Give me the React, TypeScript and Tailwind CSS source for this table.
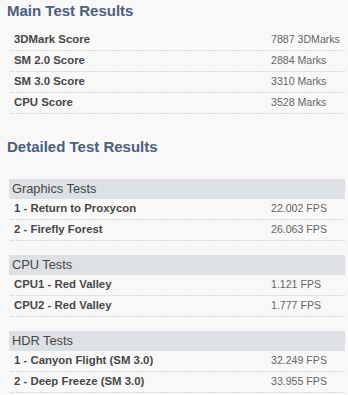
const mainResults = [
  { label: '3DMark Score', value: '7887 3DMarks' },
  { label: 'SM 2.0 Score', value: '2884 Marks' },
  { label: 'SM 3.0 Score', value: '3310 Marks' },
  { label: 'CPU Score', value: '3528 Marks' },
];

const detailedResults = [
  {
    title: 'Graphics Tests',
    rows: [
      { label: '1 - Return to Proxycon', value: '22.002 FPS' },
      { label: '2 - Firefly Forest', value: '26.063 FPS' },
    ],
  },
  {
    title: 'CPU Tests',
    rows: [
      { label: 'CPU1 - Red Valley', value: '1.121 FPS' },
      { label: 'CPU2 - Red Valley', value: '1.777 FPS' },
    ],
  },
  {
    title: 'HDR Tests',
    rows: [
      { label: '1 - Canyon Flight (SM 3.0)', value: '32.249 FPS' },
      { label: '2 - Deep Freeze (SM 3.0)', value: '33.955 FPS' },
    ],
  },
];

const ResultRow = ({ label, value }: { label: string; value: string }) => (
  <div className="grid grid-cols-[262px_1fr] items-center h-[21px] pb-px bg-[linear-gradient(to_right,#b4b4b4_1px,transparent_1px)] bg-size-[3px_1px] bg-repeat-x bg-bottom">
    <span className="pl-[5px] text-[11.4px] font-bold text-[#474747]">{label}</span>
    <span className="text-[10.6px] text-[#666]">{value}</span>
  </div>
);

export default function App() {
  return (
    <div className="w-[348px] h-[395px] overflow-hidden bg-[#f8f8f8] font-['Liberation_Sans',Arial,sans-serif]">
      <h2 className="pl-[7px] mt-[2px] text-[15px] leading-[18px] font-bold text-[#4e5f7c]">
        Main Test Results
      </h2>
      <div className="ml-[9px] mr-[3px] mt-[10px]">
        {mainResults.map((r) => (
          <ResultRow key={r.label} {...r} />
        ))}
      </div>

      <h2 className="pl-[7px] mt-[24px] text-[15px] leading-[18px] font-bold text-[#4e5f7c]">
        Detailed Test Results
      </h2>
      <div className="ml-[9px] mr-[3px] mt-[23px] flex flex-col gap-[14px]">
        {detailedResults.map((section) => (
          <div key={section.title}>
            <div className="h-[20px] flex items-center pl-[3px] bg-[#dde1e6] text-[12.8px] text-[#454545]">
              {section.title}
            </div>
            {section.rows.map((r) => (
              <ResultRow key={r.label} {...r} />
            ))}
          </div>
        ))}
      </div>
    </div>
  );
}
